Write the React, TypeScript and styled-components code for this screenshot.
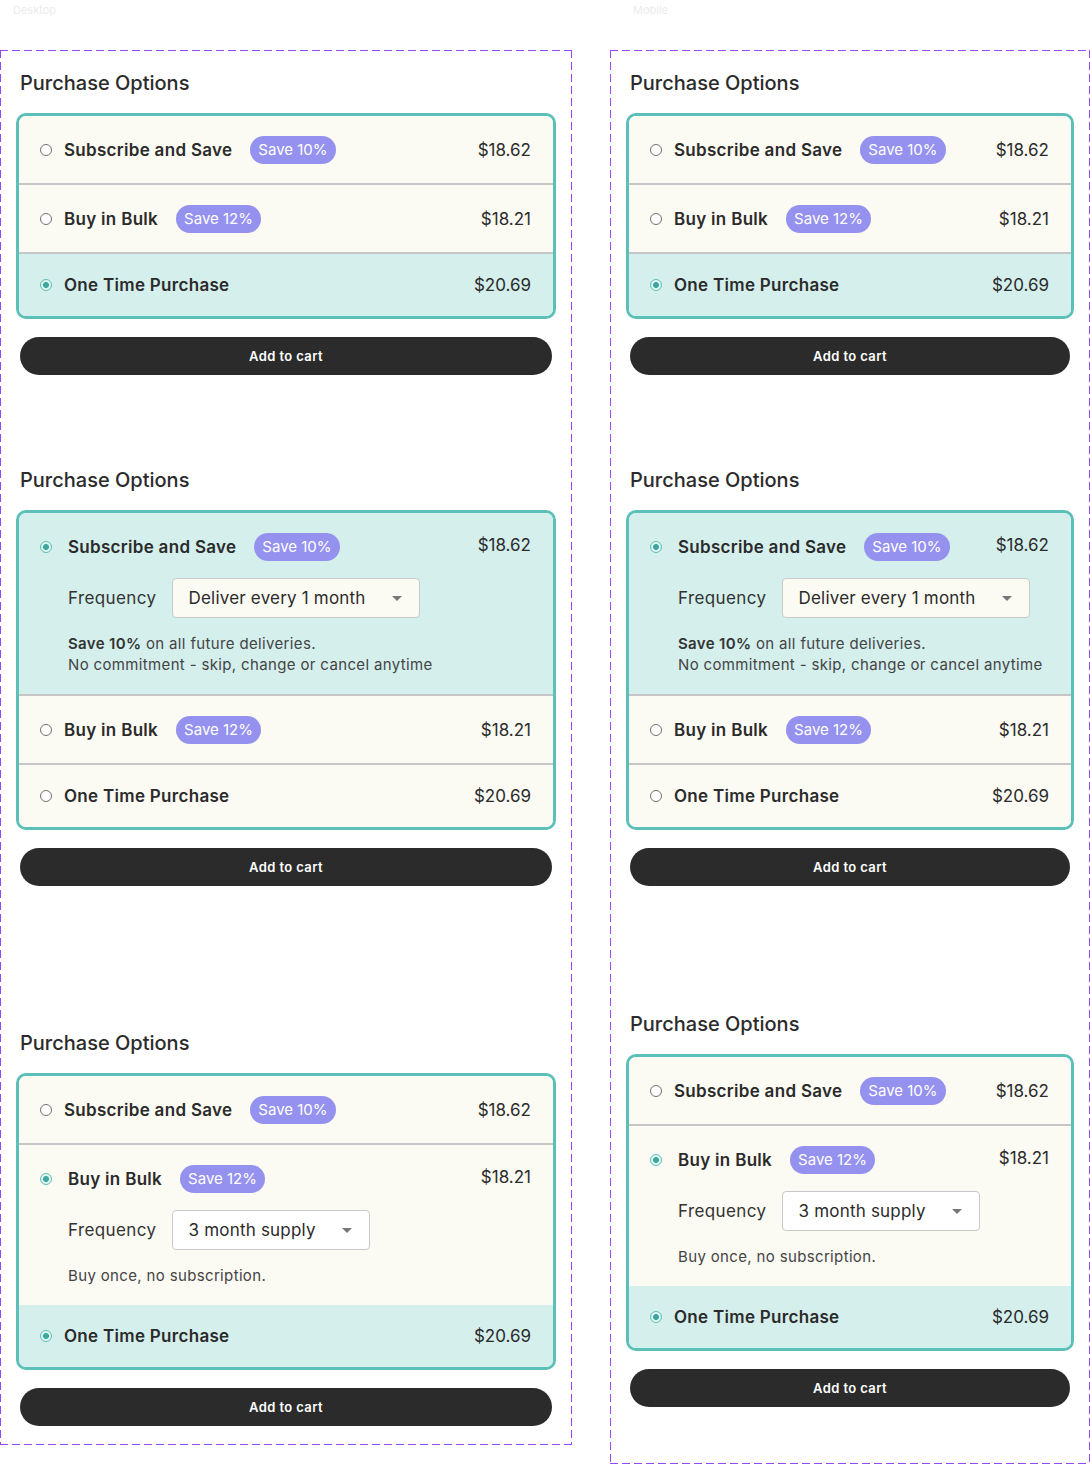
import React from 'react';
import styled, { createGlobalStyle } from 'styled-components';

const GlobalStyle = createGlobalStyle`
  body {
    margin: 0;
    background: #fff;
    font-family: Inter, "Noto Sans", sans-serif;
    color: #2b2b2b;
  }
`;

const Page = styled.div`
  display: grid;
  grid-template-columns: 572px 480px;
  column-gap: 38px;
  width: 1090px;
  align-items: start;
`;

const FrameLabel = styled.div<{ $indent: number }>`
  height: 50px;
  box-sizing: border-box;
  padding: 3px 0 0 ${(p) => p.$indent}px;
  font-size: 11px;
  color: #ececec;
`;

const Frame = styled.div<{ $bottom: number }>`
  padding: 20px 20px ${(p) => p.$bottom}px;
  background:
    repeating-linear-gradient(90deg, #9747ff 0 8px, transparent 8px 12px) top left / 100% 1px no-repeat,
    repeating-linear-gradient(90deg, #9747ff 0 8px, transparent 8px 12px) bottom left / 100% 1px no-repeat,
    repeating-linear-gradient(180deg, #9747ff 0 8px, transparent 8px 12px) top left / 1px 100% no-repeat,
    repeating-linear-gradient(180deg, #9747ff 0 8px, transparent 8px 12px) top right / 1px 100% no-repeat;
`;

const Block = styled.div<{ $gap: number }>`
  display: flex;
  flex-direction: column;
  margin-top: ${(p) => p.$gap}px;
`;

const Title = styled.h2`
  margin: 0 0 17px;
  font-size: 20px;
  font-weight: 500;
  line-height: 26px;
  color: #2b2b2b;
`;

const Card = styled.div`
  margin: 0 -4px;
  border: 3px solid #5bc0b7;
  border-radius: 10px;
  overflow: hidden;
`;

const Row = styled.div<{ $tone: 'cream' | 'teal'; $divider: boolean; $open?: boolean }>`
  display: flex;
  align-items: ${(p) => (p.$open ? 'flex-start' : 'center')};
  padding: 20px 22px 19px 21px;
  background: ${(p) => (p.$tone === 'teal' ? '#d4efec' : '#fbfaf3')};
  border-top: ${(p) => (p.$divider ? '2px solid #c6c6c6' : 'none')};

  &:last-child {
    padding-top: ${(p) => (p.$open ? '20px' : '17px')};
    padding-bottom: ${(p) => (p.$open ? '19px' : '17px')};
  }
`;

const Radio = styled.span<{ $checked: boolean; $open?: boolean }>`
  flex: none;
  width: 12px;
  height: 12px;
  box-sizing: border-box;
  border-radius: 50%;
  margin-top: ${(p) => (p.$open ? '8px' : '0')};
  border: 1px solid ${(p) => (p.$checked ? '#5bc0b7' : '#707070')};
  background: ${(p) =>
    p.$checked
      ? 'radial-gradient(circle, #3fa89e 0 2.6px, #9ad8d1 3px, #e4f5f3 3.6px 100%)'
      : '#fff'};
`;

const Body = styled.div<{ $open?: boolean }>`
  flex: 1;
  margin-left: ${(p) => (p.$open ? '16px' : '12px')};
  display: flex;
  flex-direction: column;
`;

const Head = styled.div<{ $open?: boolean }>`
  display: flex;
  align-items: ${(p) => (p.$open ? 'flex-start' : 'center')};
`;

const Label = styled.span`
  font-size: 17px;
  font-weight: 600;
  letter-spacing: 0.3px;
  line-height: 28px;
  color: #2b2b2b;
`;

const Badge = styled.span`
  margin-left: 18px;
  height: 28px;
  padding: 0 8px;
  border-radius: 14px;
  background: #9591ef;
  color: #fff;
  font-size: 15px;
  line-height: 28px;
`;

const Price = styled.span`
  margin-left: auto;
  font-size: 17px;
  line-height: 24px;
  color: #2b2b2b;
`;

const FieldRow = styled.div`
  display: flex;
  align-items: center;
  margin-top: 17px;
`;

const FieldLabel = styled.span`
  font-size: 17px;
  letter-spacing: 0.4px;
  color: #333;
`;

const Select = styled.div<{ $tone: 'cream' | 'teal' }>`
  margin-left: 15px;
  height: 40px;
  box-sizing: border-box;
  display: inline-flex;
  align-items: center;
  gap: 26px;
  padding: 0 17px 0 16px;
  border: 1px solid #c9c9c9;
  border-radius: 4px;
  background: ${(p) => (p.$tone === 'teal' ? '#fbfaf3' : '#ffffff')};
  font-size: 17px;
  letter-spacing: 0.2px;
  color: #2b2b2b;
`;

const Caret = styled.span`
  width: 0;
  height: 0;
  border-left: 5px solid transparent;
  border-right: 5px solid transparent;
  border-top: 5px solid #777;
`;

const Notes = styled.p`
  margin: 15px 0 0;
  font-size: 15px;
  letter-spacing: 0.35px;
  line-height: 21px;
  color: #444;

  b {
    font-weight: 600;
    color: #333;
  }
`;

const CartButton = styled.button`
  margin-top: 18px;
  width: 100%;
  height: 38px;
  border: none;
  border-radius: 19px;
  background: #2b2b2b;
  color: #fff;
  font-family: inherit;
  font-size: 13px;
  font-weight: 600;
  letter-spacing: 0.4px;
  cursor: pointer;
`;

type Tone = 'cream' | 'teal';

type OptionRow = {
  label: string;
  badge?: string;
  price: string;
  tone: Tone;
  checked: boolean;
  divider: boolean;
  select?: string;
  notes?: React.ReactNode;
};

const subNotes = (
  <>
    <b>Save 10%</b> on all future deliveries.
    <br />
    No commitment - skip, change or cancel anytime
  </>
);

const variants: OptionRow[][] = [
  [
    { label: 'Subscribe and Save', badge: 'Save 10%', price: '$18.62', tone: 'cream', checked: false, divider: false },
    { label: 'Buy in Bulk', badge: 'Save 12%', price: '$18.21', tone: 'cream', checked: false, divider: true },
    { label: 'One Time Purchase', price: '$20.69', tone: 'teal', checked: true, divider: true },
  ],
  [
    {
      label: 'Subscribe and Save', badge: 'Save 10%', price: '$18.62', tone: 'teal', checked: true, divider: false,
      select: 'Deliver every 1 month', notes: subNotes,
    },
    { label: 'Buy in Bulk', badge: 'Save 12%', price: '$18.21', tone: 'cream', checked: false, divider: true },
    { label: 'One Time Purchase', price: '$20.69', tone: 'cream', checked: false, divider: true },
  ],
  [
    { label: 'Subscribe and Save', badge: 'Save 10%', price: '$18.62', tone: 'cream', checked: false, divider: false },
    {
      label: 'Buy in Bulk', badge: 'Save 12%', price: '$18.21', tone: 'cream', checked: true, divider: true,
      select: '3 month supply', notes: 'Buy once, no subscription.',
    },
    { label: 'One Time Purchase', price: '$20.69', tone: 'teal', checked: true, divider: false },
  ],
];

const Option = ({ row }: { row: OptionRow }) => {
  const open = !!row.select;
  return (
    <Row $tone={row.tone} $divider={row.divider} $open={open}>
      <Radio $checked={row.checked} $open={open} />
      <Body $open={open}>
        <Head $open={open}>
          <Label>{row.label}</Label>
          {row.badge && <Badge>{row.badge}</Badge>}
          <Price>{row.price}</Price>
        </Head>
        {open && (
          <>
            <FieldRow>
              <FieldLabel>Frequency</FieldLabel>
              <Select $tone={row.tone}>
                {row.select}
                <Caret />
              </Select>
            </FieldRow>
            <Notes>{row.notes}</Notes>
          </>
        )}
      </Body>
    </Row>
  );
};

const PurchaseOptions = ({ rows, gap }: { rows: OptionRow[]; gap: number }) => (
  <Block $gap={gap}>
    <Title>Purchase Options</Title>
    <Card>
      {rows.map((row) => (
        <Option key={row.label} row={row} />
      ))}
    </Card>
    <CartButton>Add to cart</CartButton>
  </Block>
);

const App = () => {
  return (
    <>
      <GlobalStyle />
      <Page>
        <section>
          <FrameLabel $indent={13}>Desktop</FrameLabel>
          <Frame $bottom={19}>
            <PurchaseOptions rows={variants[0]} gap={0} />
            <PurchaseOptions rows={variants[1]} gap={92} />
            <PurchaseOptions rows={variants[2]} gap={144} />
          </Frame>
        </section>
        <section>
          <FrameLabel $indent={23}>Mobile</FrameLabel>
          <Frame $bottom={57}>
            <PurchaseOptions rows={variants[0]} gap={0} />
            <PurchaseOptions rows={variants[1]} gap={92} />
            <PurchaseOptions rows={variants[2]} gap={125} />
          </Frame>
        </section>
      </Page>
    </>
  );
};

export default App;
